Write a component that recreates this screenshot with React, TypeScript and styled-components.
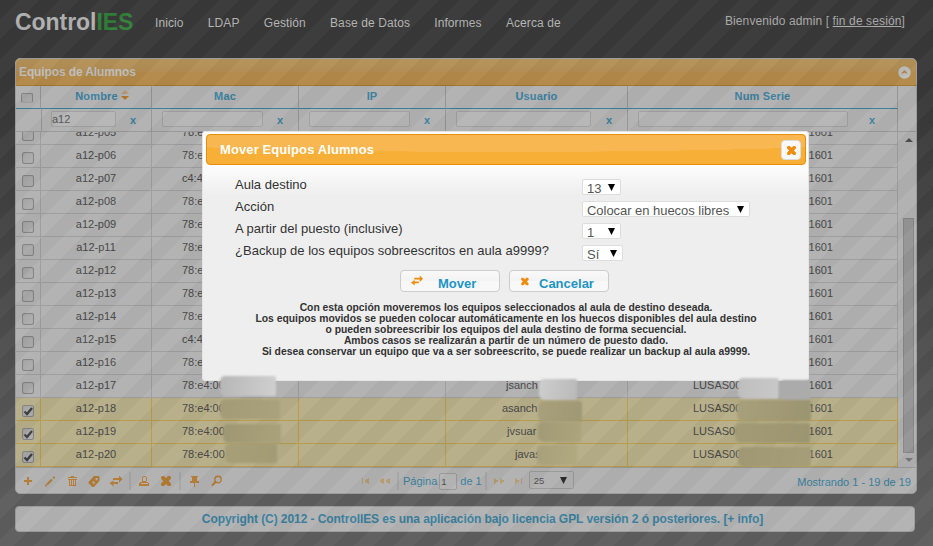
import React from 'react';
import styled, { createGlobalStyle, css } from 'styled-components';

const Global = createGlobalStyle`
  * { box-sizing: border-box; }
  body { margin: 0; overflow: hidden; font-family: "Liberation Sans", Arial, sans-serif; }
`;

const Page = styled.div`
  position: relative;
  width: 933px;
  height: 546px;
  padding: 0 15px;
  background: linear-gradient(#383838 0, #383838 100px, #5d5d5d 500px, #5d5d5d);
`;

const Header = styled.header`
  display: flex;
  height: 58px;
  align-items: flex-start;
`;

const Logo = styled.h1`
  width: 140px;
  margin: 9px 0 0;
  font-size: 23px;
  line-height: 26px;
  letter-spacing: -0.05px;
  color: #b0b0b0;
  span { color: #2f7f36; }
`;

const Nav = styled.nav`
  display: flex;
  flex: 1;
  gap: 24.200px;
  padding-top: 15px;
  font-size: 12px;
  line-height: 16px;
  letter-spacing: 0.1px;
  color: #b4b4b4;
`;

const Session = styled.div`
  margin: 13px 13px 0 0;
  font-size: 12px;
  line-height: 16px;
  letter-spacing: 0.12px;
  color: #a9a9a9;
`;

const Panel = styled.section`
  width: 902px;
  height: 436px;
  border: 1px solid #9c9ca0;
  border-radius: 5px;
  background: #b1b1b1;
  overflow: hidden;
`;

const PanelTitle = styled.div`
  display: flex;
  align-items: center;
  justify-content: space-between;
  height: 27px;
  padding: 0 5px 0 3px;
  border-bottom: 1px solid #a1752f;
  background: linear-gradient(#b3925a 0, #b18c51 50%, #b2894a 51%, #b38846);
  font-size: 12px;
  font-weight: bold;
  letter-spacing: -0.12px;
  color: #bdbdbd;
`;

const columns = '25px 111px 147px 147px 182px 270px 18px';

const HeadRow = styled.div`
  display: grid;
  grid-template-columns: ${columns};
  height: 23px;
`;

const HeadCell = styled.div<{ $plain?: boolean; $shift?: number }>`
  display: flex;
  align-items: center;
  justify-content: center;
  gap: 3px;
  border-right: 1px solid #929292;
  border-bottom: 1px solid ${p => (p.$plain ? '#b1b1b1' : '#3a7c9a')};
  padding: 0 0 2px ${p => p.$shift ?? 0}px;
  font-size: 11px;
  font-weight: bold;
  letter-spacing: 0.15px;
  color: #397e9d;
  &:last-child { border-right: 0; }
`;

const FilterRow = styled(HeadRow)`
  border-bottom: 1px solid #989898;
`;

const FilterCell = styled.div<{ $end?: number }>`
  display: flex;
  align-items: flex-start;
  padding: 2px ${p => p.$end ?? 15}px 0 10px;
  justify-content: space-between;
  border-right: 1px solid #959595;
  &:last-child { border-right: 0; }
  b { font-size: 11px; line-height: 17px; margin-top: 1px; color: #397e9d; }
`;

const FilterInput = styled.div<{ $w: number }>`
  width: ${p => p.$w}px;
  height: 16px;
  border: 1px solid #9f9f9f;
  border-radius: 2px;
  background: #b5b5b5;
  font-size: 11px;
  line-height: 15px;
  color: #555;
`;

const Body = styled.div`
  display: flex;
  height: 335px;
`;

const Rows = styled.div`
  display: flex;
  flex-direction: column;
  justify-content: flex-end;
  width: 882px;
  overflow: hidden;
`;

const Row = styled.div<{ $on?: boolean }>`
  --line: ${p => (p.$on ? '#b79b48' : '#9d9d9d')};
  display: grid;
  grid-template-columns: 25px 111px 147px 147px 182px 270px;
  flex: 0 0 23px;
  background: ${p => (p.$on ? '#b6ae87' : 'transparent')};
`;

const Cell = styled.div<{ $left?: number }>`
  display: flex;
  align-items: center;
  justify-content: ${p => (p.$left === undefined ? 'center' : 'flex-start')};
  padding: 0 0 3px ${p => p.$left ?? 0}px;
  border-right: 1px solid var(--line);
  border-bottom: 1px solid var(--line);
  font-size: 11px;
  color: #474747;
  white-space: nowrap;
`;

const CheckCell = styled(Cell)`
  padding: 7px 0 0 6px;
  justify-content: flex-start;
  align-items: flex-start;
`;

const Serial = styled.span`
  display: flex;
  justify-content: space-between;
  width: 140px;
`;

const CheckBox = styled.span`
  display: block;
  width: 12px;
  height: 12px;
  border: 1px solid #828282;
  border-radius: 2px;
  background: linear-gradient(135deg, #a2a2a2, #b0b0b0);
  box-shadow: inset 0 0 1px #8c8c8c;
  svg { display: block; overflow: visible; }
`;

const HeadCheck = styled(CheckBox)`
  height: 10px;
  margin: 4px 2px 0 0;
  border-bottom-color: #a2a2a2;
`;

const Scroll = styled.div`
  display: flex;
  flex-direction: column;
  align-items: center;
  width: 18px;
  padding: 6px 0 4px 3px;
  background: #b0b0b0;
`;

const Thumb = styled.div`
  width: 11px;
  height: 235px;
  margin: 76px 0 5px;
  border: 1px solid #858585;
  background: #949494;
`;

const Arrow = styled.i<{ $up?: boolean; $size?: number; $color?: string }>`
  border: ${p => p.$size ?? 4}px solid transparent;
  ${p => (p.$up ? css`border-top: 0; border-bottom-color: ${p.$color ?? '#4d4d4d'};` : css`border-bottom: 0; border-top-color: ${p.$color ?? '#777'};`)}
`;

const SortArrows = styled.span`
  display: flex;
  flex-direction: column;
  gap: 2px;
  margin-bottom: 2px;
`;

const Pager = styled.div`
  display: grid;
  grid-template-columns: 343px 1fr 140px;
  height: 26px;
  border-top: 1px solid #989898;
  color: #397e9d;
`;

const Divider = styled.span`
  width: 2px;
  height: 18px;
  background: #a5a5a5;
`;

const Tools = styled.div`
  display: flex;
  align-items: center;
  padding-left: 5px;
  gap: 8px;
  ${Divider} { margin: 0 -2px; }
`;

const Center = styled.div`
  display: flex;
  align-items: center;
  gap: 5px;
  font-size: 11px;
  ${Divider} { margin-right: -1px; }
  ${Divider} + svg { margin-left: 1px; }
`;

const PageInput = styled.span`
  flex: none;
  width: 18px;
  height: 17px;
  margin: 2px -3px 0 -3px;
  border: 1px solid #999;
  border-radius: 2px;
  background: #b6b6b6;
  font-size: 9.5px;
  line-height: 15px;
  padding-left: 1px;
  color: #4f4f4f;
`;

const PageCount = styled.span`
  margin: 0 -2px 0 1px;
`;

const SizeSelect = styled.span`
  display: flex;
  flex: none;
  align-items: center;
  justify-content: space-between;
  width: 45px;
  height: 18px;
  margin: 0 0 1px -1px;
  padding: 0 6px 0 4px;
  border: 1px solid #999;
  border-radius: 2px;
  font-size: 9.5px;
  color: #505050;
`;

const Status = styled.div`
  padding: 8px 5px 0 0;
  font-size: 11px;
  line-height: 13px;
  text-align: right;
  white-space: nowrap;
`;

const Footer = styled.footer`
  width: 900px;
  height: 26px;
  margin-top: 12px;
  border: 1px solid #9c9c9c;
  border-radius: 4px;
  background: #b2b2b2;
  font-size: 12px;
  font-weight: bold;
  line-height: 24px;
  letter-spacing: -0.068px;
  text-align: center;
  padding: 0 1px 0 36px;
  color: #397e9d;
`;

const Shade = styled.div`
  position: absolute;
  inset: 0;
  background: linear-gradient(135deg,
    rgba(0,0,0,.022) 25%, rgba(255,255,255,.022) 25%, rgba(255,255,255,.022) 50%,
    rgba(0,0,0,.022) 50%, rgba(0,0,0,.022) 75%, rgba(255,255,255,.022) 75%) 0 0 / 40px 40px;
`;

const Smudge = styled.div<{ $x: number; $y: number; $w: number; $h: number; $a: string; $b: string }>`
  position: absolute;
  left: ${p => p.$x}px;
  top: ${p => p.$y}px;
  width: ${p => p.$w}px;
  height: ${p => p.$h}px;
  border-radius: 5px 2px 2px 6px;
  background: linear-gradient(100deg, ${p => p.$a}, ${p => p.$b});
  filter: blur(1px);
`;

const Dialog = styled.div`
  position: absolute;
  left: 202px;
  top: 131px;
  width: 607px;
  height: 250px;
  padding: 3px 3px 0 4px;
  border-radius: 4px;
  background: linear-gradient(#fff 0, #fdfdfd 35px, #eee 65px, #eee);
  box-shadow: inset 0 0 0 1px #e4e4e4;
`;

const DialogTitle = styled.div`
  display: flex;
  align-items: center;
  justify-content: space-between;
  height: 31px;
  padding: 0 4px 0 13px;
  border: 1px solid #e78f08;
  border-radius: 4px;
  background: radial-gradient(ellipse 440px 17px at 50% 0, #f8b750 99%, transparent 100%), #f7af38;
  font-size: 13px;
  font-weight: bold;
  letter-spacing: 0.1px;
  color: #fff;
`;

const Close = styled.span`
  display: flex;
  align-items: center;
  justify-content: center;
  width: 20px;
  height: 20px;
  padding: 1px 0 0 1px;
  border: 1px solid #ddd;
  border-radius: 4px;
  background: #f9f9f9;
`;

const Form = styled.div`
  display: grid;
  grid-template-columns: 347px auto;
  grid-auto-rows: 22px;
  justify-items: start;
  padding: 12px 0 0 29px;
  font-size: 13px;
  line-height: 16px;
  letter-spacing: 0.02px;
  color: #333;
`;

const Select = styled.span<{ $w: number }>`
  display: flex;
  justify-content: space-between;
  width: ${p => p.$w}px;
  height: 16px;
  margin-top: 2px;
  padding: 1px 5px 0 4px;
  overflow: hidden;
  border: 1px solid #ddd;
  border-radius: 2px;
  background: #fff;
  letter-spacing: -0.04px;
  white-space: nowrap;
  color: #555;
  svg { margin-top: 3px; flex: none; }
`;

const Actions = styled.div`
  display: flex;
  gap: 9px;
  padding: 5px 0 0 194px;
`;

const Button = styled.button<{ $gap: number }>`
  display: flex;
  align-items: center;
  gap: ${p => p.$gap}px;
  width: 100px;
  height: 22px;
  padding: 0 0 0 10px;
  border: 1px solid #ccc;
  border-radius: 4px;
  background: linear-gradient(#f9f9f9, #f3f3f3 50%, #f8f8f8 51%);
  font: bold 13px "Liberation Sans", Arial, sans-serif;
  color: #1c94c4;
  span { padding-top: 4px; }
`;

const Help = styled.p`
  margin: 10px 0 0;
  font-size: 10.350px;
  font-weight: bold;
  line-height: 11px;
  text-align: center;
  color: #333;
`;

const icons = {
  plus: 'M7 4h2v3h3v2H9v3H7V9H4V7h3z',
  trash: 'M4 4h3V3h3v1h3v1H4zM4 6h9v1h-1v6H5V7H4zM6 7v5h1V7zM8 7v5h1V7zM10 7v5h1V7z',
  tag: 'M2.500 9l5.500-6h4.500l1 1v4L8 14H6.500L2.500 10zM9.500 5v2.200h2.200V5zM6 9.200l2 2 1.200-1.200-2-2z',
  swap: 'M5 5h6V2.500L14.500 6 11 9.500V7H5zM5.500 7.500V9H10v2H5.500v2.500L1.500 10z',
  person: 'M6 4h1V3h3v1h1v4h-1v1h2v1h1v3H3v-3h1V9h2V8H6zM7 4v4h3V4zM5 10v1h7v-1z',
  cross: 'M4 3h2l2 2 2-2h2l1 1v1.5L10.700 8 13 10.500V12l-1 1h-2l-2-2-2 2H4l-1-1v-1.500L5.300 8 3 5.500V4z',
  pin: 'M5 3h7v1h-1v4h2v2H9v4H8v-4H4V8h2V4H5z',
  first: 'M4 5h1v6H4zM11 5v6L6 8z',
  prev: 'M7 5v6L2 8zM13 5v6L8 8z',
  next: 'M3 5v6l5-3zM9 5v6l5-3z',
  last: 'M5 5v6l5-3zM11 5h1v6h-1z',
  caret: 'M4 4h8L8 12z',
};

const smooth = ['cross', 'tag', 'swap', 'caret'];

function Icon({ name, color = '#b27a33', size = 14, view = '1 1 14 14' }: { name: keyof typeof icons; color?: string; size?: number; view?: string }) {
  return (
    <svg width={size} height={size} viewBox={view} fill={color} fillRule="evenodd" shapeRendering={smooth.includes(name) ? 'auto' : 'crispEdges'}>
      <path d={icons[name]} />
    </svg>
  );
}

function PencilIcon() {
  return (
    <svg width="14" height="14" viewBox="0 0 14 14" fill="none" stroke="#b27a33">
      <path d="M4 10.500L9 5.500" strokeWidth="2" />
      <path d="M2.500 12l1-1M10.200 4.300l1.300-1.300" strokeWidth="2" />
    </svg>
  );
}

function SearchIcon() {
  return (
    <svg width="14" height="14" viewBox="0 0 14 14" fill="none" stroke="#b27a33">
      <circle cx="9" cy="5.500" r="3.200" strokeWidth="1.400" />
      <path d="M6.500 8L3 11.500" strokeWidth="2" />
    </svg>
  );
}

const faded = '#b39a70';

const rows: { id: string; mac: string; tail: string; user?: string; userX?: number; on?: boolean }[] = [
  { id: 'p05', mac: '78:e4:00', tail: '1601' },
  { id: 'p06', mac: '78:e4:00', tail: '1601' },
  { id: 'p07', mac: 'c4:46:19', tail: '21601' },
  { id: 'p08', mac: '78:e4:00', tail: '1601' },
  { id: 'p09', mac: '78:e4:00', tail: '1601' },
  { id: 'p11', mac: '78:e4:00', tail: '1601' },
  { id: 'p12', mac: '78:e4:00', tail: '1601' },
  { id: 'p13', mac: '78:e4:00', tail: '31601' },
  { id: 'p14', mac: '78:e4:00', tail: '1601' },
  { id: 'p15', mac: 'c4:46:19', tail: '31601' },
  { id: 'p16', mac: '78:e4:00', tail: '21601' },
  { id: 'p17', mac: '78:e4:00', tail: '1601', user: 'jsanch', userX: 60 },
  { id: 'p18', mac: '78:e4:00', tail: '1601', user: 'asanch', userX: 56, on: true },
  { id: 'p19', mac: '78:e4:00', tail: '1601', user: 'jvsuar', userX: 61, on: true },
  { id: 'p20', mac: '78:e4:00', tail: '1601', user: 'javas', userX: 69, on: true },
];

const filters = [
  { w: 65, value: 'a12' },
  { w: 101 },
  { w: 101 },
  { w: 135 },
  { w: 210, end: 22 },
];

const smudges: [number, number, number, number, string, string][] = [
  [220, 376, 56, 20, '#b6b6b6', '#d0d0d0'],
  [220, 399, 60, 20, '#a29b75', '#aaa27c'],
  [223, 424, 58, 19, '#9e9773', '#aaa27a'],
  [225, 443, 52, 20, '#a79f77', '#a39b75'],
  [539, 379, 38, 21, '#cecece', '#b9b9b9'],
  [538, 401, 44, 21, '#a8a07b', '#9f9874'],
  [538, 422, 43, 20, '#a19a75', '#aca47c'],
  [537, 445, 40, 20, '#a8a07a', '#b1a980'],
  [738, 378, 41, 21, '#bebebe', '#c9c9c9'],
  [779, 380, 31, 21, '#ababab', '#ababab'],
  [737, 400, 74, 21, '#a8a07b', '#9b9470'],
  [735, 423, 75, 20, '#a39b75', '#9c9571'],
  [738, 447, 73, 20, '#9f9873', '#a69e78'],
];

const fields = [
  { label: 'Aula destino', value: '13', w: 39 },
  { label: 'Acción', value: 'Colocar en huecos libres', w: 168 },
  { label: 'A partir del puesto (inclusive)', value: '1', w: 39 },
  { label: '¿Backup de los equipos sobreescritos en aula a9999?', value: 'Sí', w: 41 },
];

export default function App() {
  return (
    <Page>
      <Global />
      <Header>
        <Logo>Control<span>IES</span></Logo>
        <Nav>
          {['Inicio', 'LDAP', 'Gestión', 'Base de Datos', 'Informes', 'Acerca de'].map(n => <span key={n}>{n}</span>)}
        </Nav>
        <Session>Bienvenido admin [ <u>fin de sesión</u>]</Session>
      </Header>

      <Panel>
        <PanelTitle>
          Equipos de Alumnos
          <svg width="13" height="13" viewBox="0 0 13 13">
            <circle cx="6.500" cy="6.500" r="6.200" fill="#bdbdbd" />
            <path d="M3 7.500L6.500 4 10 7.500H8L6.500 6.500 5 7.500z" fill="#b0864a" />
          </svg>
        </PanelTitle>
        <HeadRow>
          <HeadCell><HeadCheck /></HeadCell>
          <HeadCell $shift={12}>
            Nombre
            <SortArrows><Arrow $up $color="#b59a70" /><Arrow $color="#b06f22" /></SortArrows>
          </HeadCell>
          <HeadCell>Mac</HeadCell>
          <HeadCell>IP</HeadCell>
          <HeadCell>Usuario</HeadCell>
          <HeadCell>Num Serie</HeadCell>
          <HeadCell $plain />
        </HeadRow>
        <FilterRow>
          <FilterCell />
          {filters.map((f, i) => (
            <FilterCell key={i} $end={f.end}>
              <FilterInput $w={f.w}>{f.value}</FilterInput><b>x</b>
            </FilterCell>
          ))}
          <FilterCell />
        </FilterRow>
        <Body>
          <Rows>
            {rows.map(r => (
              <Row key={r.id} $on={r.on}>
                <CheckCell>
                  <CheckBox>
                    {r.on && (
                      <svg width="10" height="10" viewBox="0 0 10 10">
                        <path d="M1.500 5.500L4 8 9 2" fill="none" stroke="#3d3d3d" strokeWidth="2.300" />
                      </svg>
                    )}
                  </CheckBox>
                </CheckCell>
                <Cell>a12-{r.id}</Cell>
                <Cell $left={30}>{r.mac}</Cell>
                <Cell />
                <Cell $left={r.userX ?? 60}>{r.user}</Cell>
                <Cell $left={65}><Serial><span>LUSAS00</span><span>{r.tail}</span></Serial></Cell>
              </Row>
            ))}
          </Rows>
          <Scroll><Arrow $up /><Thumb /><Arrow /></Scroll>
        </Body>
        <Pager>
          <Tools>
            <Icon name="plus" /><PencilIcon /><Icon name="trash" /><Icon name="tag" /><Icon name="swap" />
            <Divider /><Icon name="person" /><Icon name="cross" /><Divider />
            <Icon name="pin" /><SearchIcon />
          </Tools>
          <Center>
            <Icon name="first" color={faded} /><Icon name="prev" color={faded} />
            <Divider /><span>Página</span><PageInput>1</PageInput><PageCount>de 1</PageCount><Divider />
            <Icon name="next" color={faded} /><Icon name="last" color={faded} />
            <SizeSelect>25<Icon name="caret" color="#2b2b2b" size={7} view="4 4 8 8" /></SizeSelect>
          </Center>
          <Status>Mostrando 1 - 19 de 19</Status>
        </Pager>
      </Panel>

      <Footer>Copyright (C) 2012 - ControlIES es una aplicación bajo licencia GPL versión 2 ó posteriores. [+ info]</Footer>

      <Shade />

      <Dialog>
        <DialogTitle>
          Mover Equipos Alumnos
          <Close><Icon name="cross" color="#ef8c08" size={9} view="3 3 10 10" /></Close>
        </DialogTitle>
        <Form>
          {fields.map(f => (
            <React.Fragment key={f.label}>
              <span>{f.label}</span>
              <Select $w={f.w}>{f.value}<Icon name="caret" color="#000" size={7} view="4 4 8 8" /></Select>
            </React.Fragment>
          ))}
        </Form>
        <Actions>
          <Button $gap={15}><Icon name="swap" color="#ef8c08" size={12} view="1.500 2 13 13" /><span>Mover</span></Button>
          <Button $gap={10}><Icon name="cross" color="#ef8c08" size={9} view="1.500 2 12 12" /><span>Cancelar</span></Button>
        </Actions>
        <Help>
          Con esta opción moveremos los equipos seleccionados al aula de destino deseada.<br />
          Los equipos movidos se pueden colocar automáticamente en los huecos disponibles del aula destino<br />
          o pueden sobreescribir los equipos del aula destino de forma secuencial.<br />
          Ambos casos se realizarán a partir de un número de puesto dado.<br />
          Si desea conservar un equipo que va a ser sobreescrito, se puede realizar un backup al aula a9999.
        </Help>
      </Dialog>

      {smudges.map(([x, y, w, h, a, b]) => (
        <Smudge key={`${x}-${y}`} $x={x} $y={y} $w={w} $h={h} $a={a} $b={b} />
      ))}
    </Page>
  );
}
